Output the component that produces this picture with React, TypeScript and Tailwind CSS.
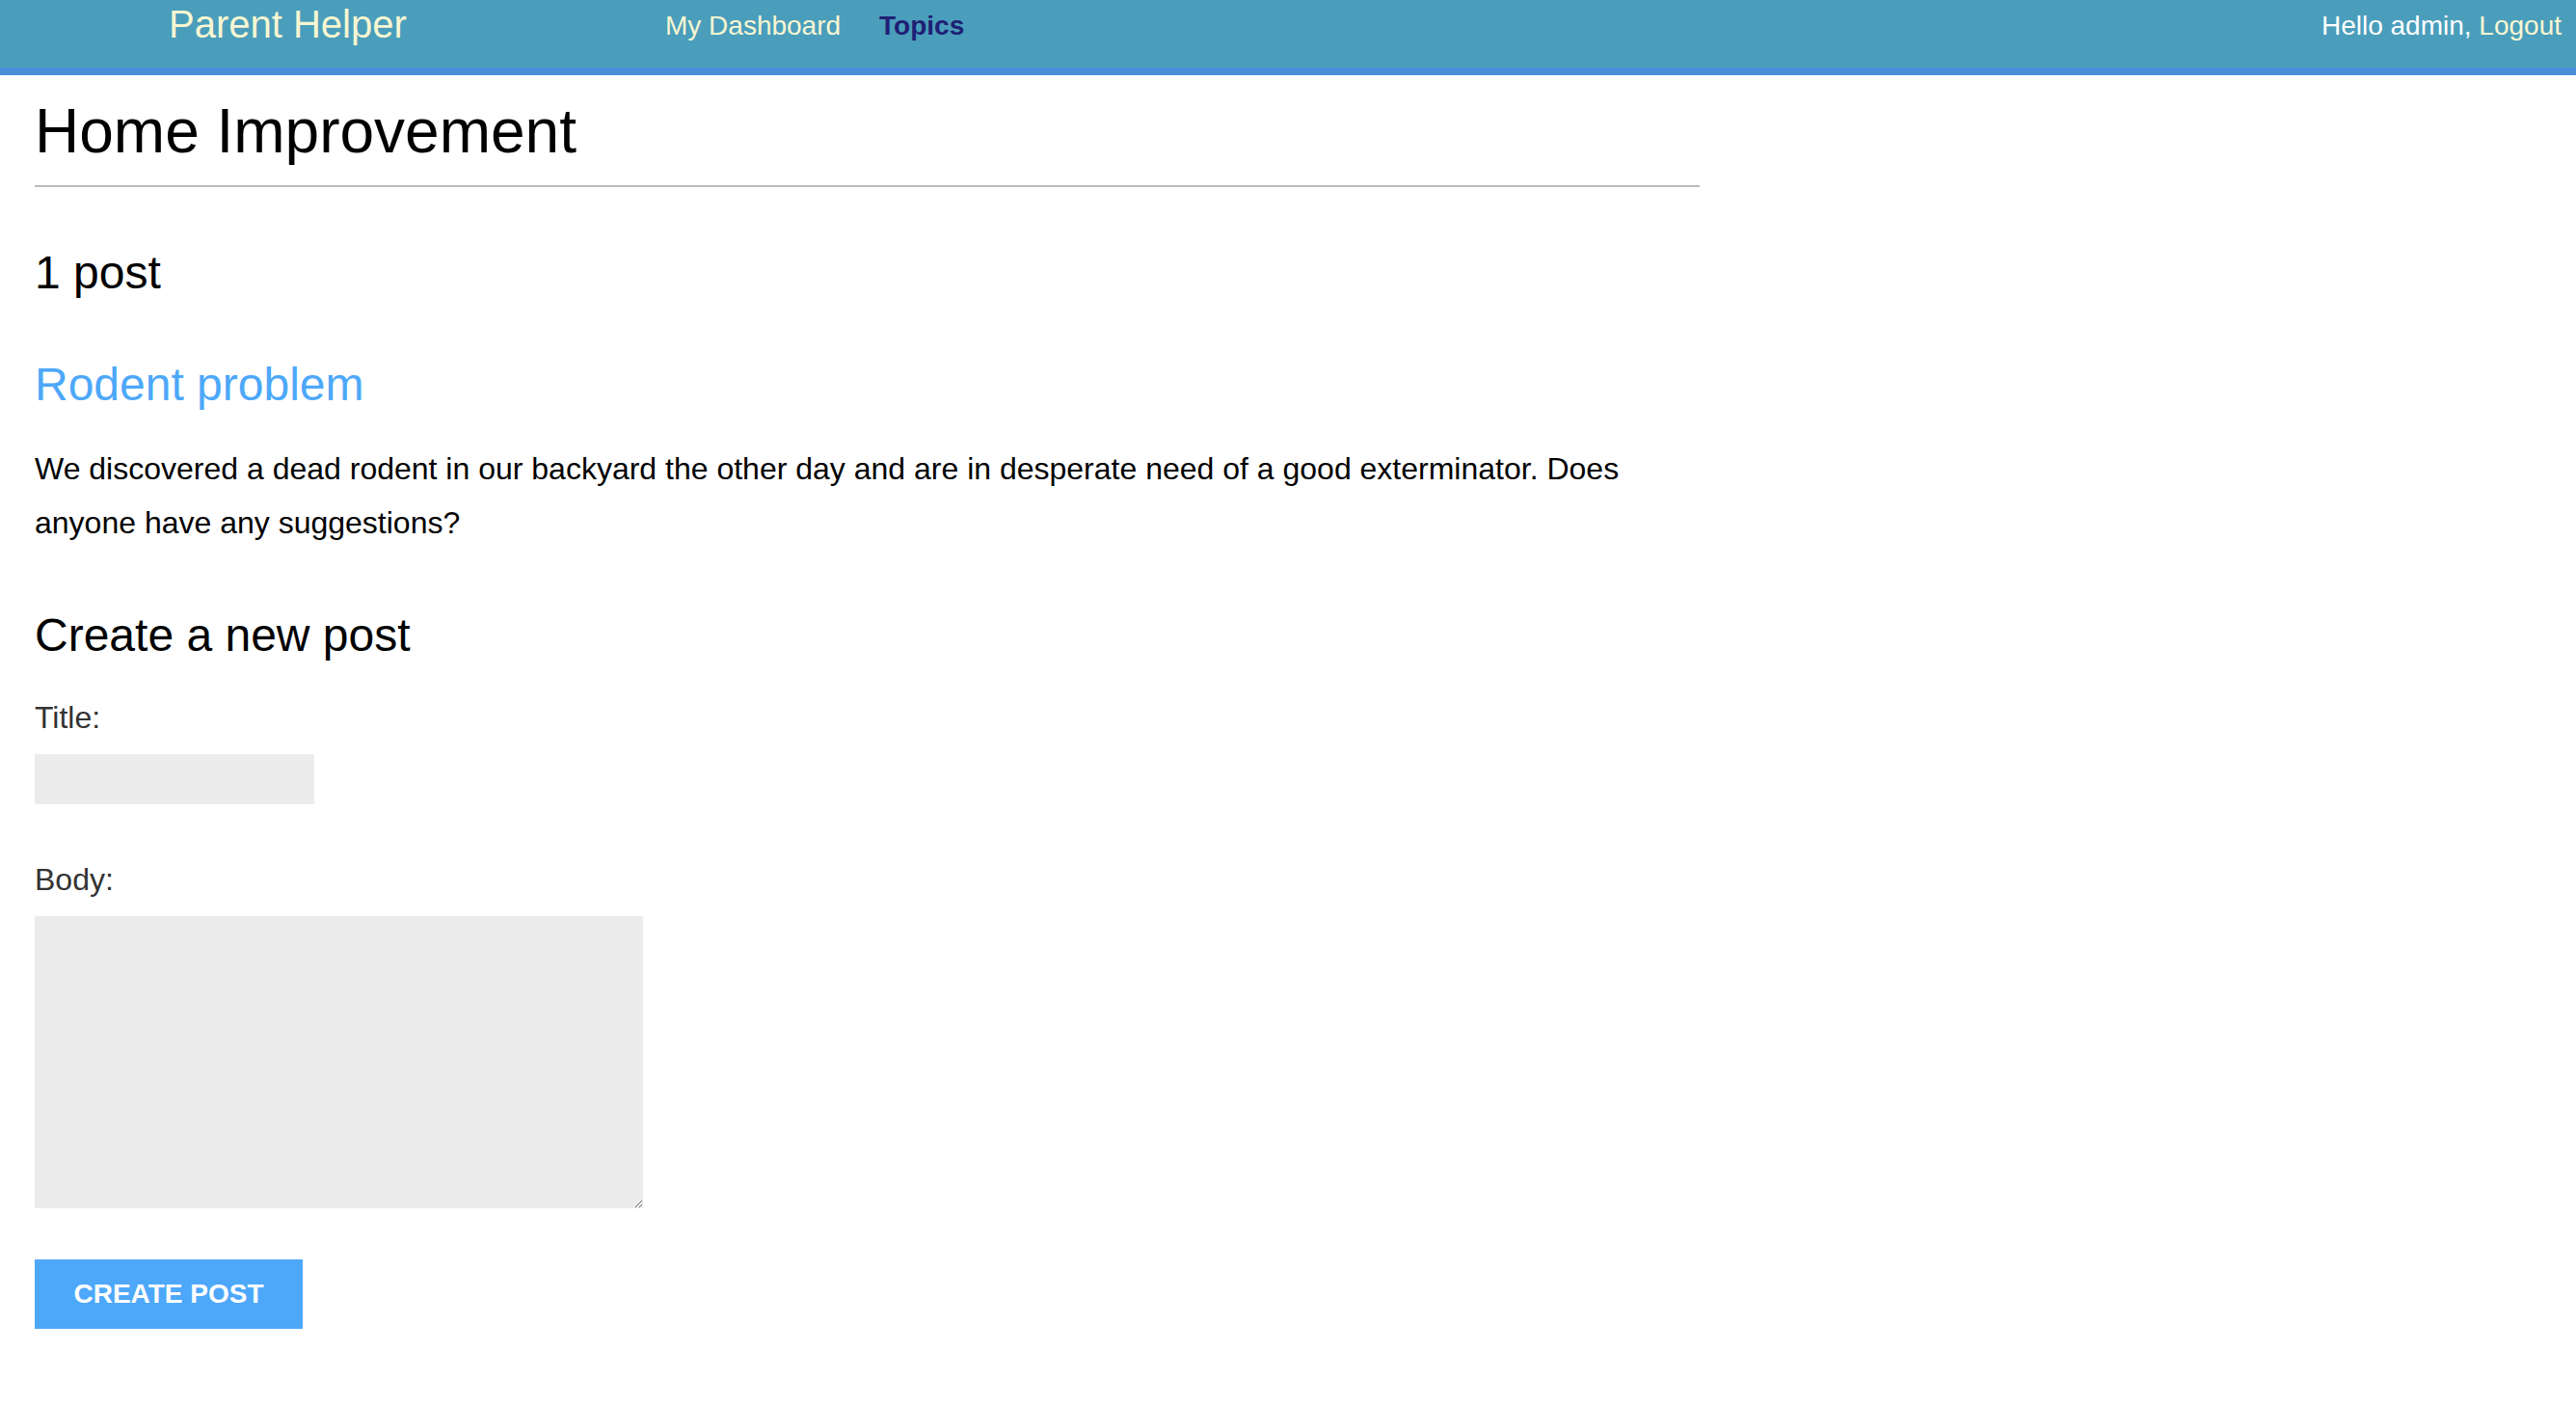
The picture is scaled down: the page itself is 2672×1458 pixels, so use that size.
const FONT = "font-['Liberation_Sans',Arial,Helvetica,sans-serif]";

function Header() {
  return (
    <header className="flex h-[78px] items-start border-b-8 border-[#4a90d9] bg-[#4a9ebb]">
      <div className="w-[690px] shrink-0 pl-[175px] pt-[2px] text-[40px] leading-[46px] text-[#f8f6d2]">
        Parent Helper
      </div>
      <nav className="flex gap-[40px] pt-[11px] text-[28px] leading-[32px]">
        <a className="text-[#f8f6d2]">My Dashboard</a>
        <a className="font-bold text-[#1f1f75]">Topics</a>
      </nav>
      <div className="ml-auto pr-[15px] pt-[11px] text-[28px] leading-[32px] text-white">
        Hello admin, <a className="text-[#f8f6d2]">Logout</a>
      </div>
    </header>
  );
}

export default function App() {
  return (
    <div className={`min-h-[1458px] bg-white ${FONT}`}>
      <Header />
      <main className="ml-[36px] w-[1727px] text-black">
        <h1 className="mt-[22px] border-b-2 border-[#bbbbbb] pb-[20px] text-[64px] leading-[72px]">
          Home Improvement
        </h1>
        <h2 className="mt-[61px] text-[48px] leading-[56px]">1 post</h2>
        <h2 className="mt-[60px] text-[48px] leading-[56px] text-[#4da8f9]">Rodent problem</h2>
        <p className="mt-[31px] text-[32px] leading-[56px]">
          We discovered a dead rodent in our backyard the other day and are in desperate need of a good
          exterminator. Does anyone have any suggestions?
        </p>
        <h2 className="mt-[61px] text-[48px] leading-[56px]">Create a new post</h2>
        <form className="flex flex-col items-start">
          <label className="mt-[37px] text-[32px] leading-[40px] text-[#333333]">Title:</label>
          <input className="mt-[18px] h-[52px] w-[290px] border-0 bg-[#ececec] px-2 text-[28px] outline-none" />
          <label className="mt-[58px] text-[32px] leading-[40px] text-[#333333]">Body:</label>
          <textarea className="mt-[18px] block h-[303px] w-[631px] border-0 bg-[#ececec] p-2 text-[28px] outline-none" />
          <button
            type="button"
            className="mt-[53px] h-[72px] w-[278px] bg-[#4da8f9] text-[28px] font-bold text-white"
          >
            CREATE POST
          </button>
        </form>
      </main>
    </div>
  );
}
